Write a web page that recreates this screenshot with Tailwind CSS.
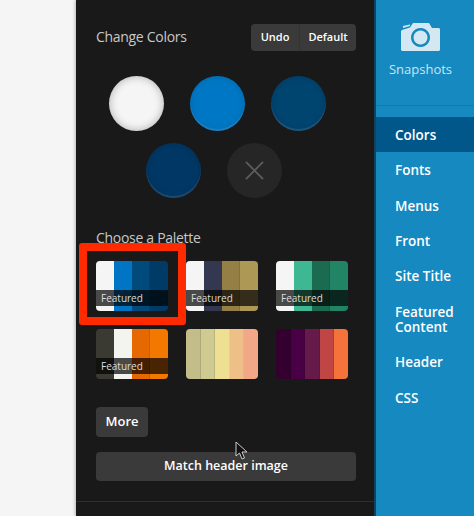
<!DOCTYPE html>
<html lang="en">
<head>
  <meta charset="UTF-8" />
  <title>Customize Colors</title>
  <script src="https://cdn.jsdelivr.net/npm/@tailwindcss/browser@4"></script>
</head>
<body class="bg-[#f5f5f5] font-['Open_Sans',sans-serif] overflow-hidden">
  <div class="flex h-[516px] w-[474px] overflow-hidden">
    <!-- page behind the panel -->
    <div class="w-[76px] shrink-0 bg-[#f5f5f5]"></div>

    <!-- colors panel -->
    <div class="relative w-[298px] shrink-0 bg-[#191919] shadow-[-1px_0_3px_rgba(0,0,0,0.25)]">
      <div class="pl-5 pr-[18px] pt-6">
        <div class="flex h-[27px] items-center justify-between">
          <h2 class="pb-[2px] text-[14px] tracking-[-0.3px] text-[#c8c8c8]">Change Colors</h2>
          <div class="flex">
            <button class="h-[27px] w-12 rounded-l-sm bg-[#3a3a3a] pb-[1px] text-[11px] font-semibold text-white">Undo</button>
            <button class="h-[27px] w-[57px] rounded-r-sm border-l border-[#333] bg-[#3a3a3a] pb-[1px] text-[11px] font-semibold text-white">Default</button>
          </div>
        </div>

        <div class="ml-[13px] mt-[25px] flex gap-[26px]">
          <div class="size-[55px] rounded-full bg-[#f5f5f5] shadow-[inset_0_0_8px_rgba(0,0,0,0.3)]"></div>
          <div class="size-[55px] rounded-full bg-[#0077c4] shadow-[inset_0_-2px_1px_rgba(255,255,255,0.12),inset_0_0_6px_rgba(0,0,0,0.15)]"></div>
          <div class="size-[55px] rounded-full bg-[#004470] shadow-[inset_0_-2px_1px_rgba(255,255,255,0.12),inset_0_0_6px_rgba(0,0,0,0.15)]"></div>
        </div>
        <div class="ml-[50px] mt-3 flex gap-[26px]">
          <div class="size-[55px] rounded-full bg-[#003764] shadow-[inset_0_-2px_1px_rgba(255,255,255,0.12),inset_0_0_6px_rgba(0,0,0,0.15)]"></div>
          <div class="flex size-[55px] items-center justify-center rounded-full bg-[#262626]">
            <svg class="size-[19px]" viewBox="0 0 20 20" fill="none" stroke="#5c5c5c" stroke-width="2"><path d="M1 1 19 19M19 1 1 19" /></svg>
          </div>
        </div>

        <h2 class="mt-[30px] text-[14px] leading-5 tracking-[-0.3px] text-[#c8c8c8]">Choose a Palette</h2>

        <div class="mt-[13px] grid grid-cols-[72px_72px_72px] gap-x-[18px] gap-y-[18px]">
          <div class="relative flex h-[50px] overflow-hidden rounded-sm">
            <div class="flex-1 bg-[#f5f5f5]"></div>
            <div class="flex-1 bg-[#0075c4]"></div>
            <div class="flex-1 border-r border-black/10 bg-[#004a7c]"></div>
            <div class="flex-1 bg-[#003a66]"></div>
            <div class="absolute inset-x-0 top-[29px] h-4 bg-black/70 pl-[5px] text-[10px] leading-4 text-[#ddd]">Featured</div>
          </div>
          <div class="relative flex h-[50px] overflow-hidden rounded-sm">
            <div class="flex-1 bg-[#f5f5f5]"></div>
            <div class="flex-1 bg-[#333850]"></div>
            <div class="flex-1 border-r border-black/10 bg-[#957f45]"></div>
            <div class="flex-1 bg-[#ae9856]"></div>
            <div class="absolute inset-x-0 top-[29px] h-4 bg-black/70 pl-[5px] text-[10px] leading-4 text-[#ddd]">Featured</div>
          </div>
          <div class="relative flex h-[50px] overflow-hidden rounded-sm">
            <div class="flex-1 bg-[#f5f5f5]"></div>
            <div class="flex-1 bg-[#3eb893]"></div>
            <div class="flex-1 border-r border-black/10 bg-[#1b6b50]"></div>
            <div class="flex-1 bg-[#218465]"></div>
            <div class="absolute inset-x-0 top-[29px] h-4 bg-black/70 pl-[5px] text-[10px] leading-4 text-[#ddd]">Featured</div>
          </div>
          <div class="relative flex h-[50px] overflow-hidden rounded-sm">
            <div class="flex-1 bg-[#3a3a32]"></div>
            <div class="flex-1 bg-[#f3f3ef]"></div>
            <div class="flex-1 border-r border-black/10 bg-[#e66800]"></div>
            <div class="flex-1 bg-[#f27800]"></div>
            <div class="absolute inset-x-0 top-[29px] h-4 bg-black/70 pl-[5px] text-[10px] leading-4 text-[#ddd]">Featured</div>
          </div>
          <div class="flex h-[50px] overflow-hidden rounded-sm">
            <div class="flex-1 border-r border-black/10 bg-[#c2bd89]"></div>
            <div class="flex-1 border-r border-black/10 bg-[#cfca8f]"></div>
            <div class="flex-1 border-r border-black/5 bg-[#efdf92]"></div>
            <div class="flex-1 border-r border-black/5 bg-[#eec088]"></div>
            <div class="flex-1 bg-[#f2a887]"></div>
          </div>
          <div class="flex h-[50px] overflow-hidden rounded-sm">
            <div class="flex-1 border-r border-black/10 bg-[#33002f]"></div>
            <div class="flex-1 border-r border-black/10 bg-[#4a0044]"></div>
            <div class="flex-1 border-r border-black/10 bg-[#661a4a]"></div>
            <div class="flex-1 border-r border-black/10 bg-[#c04545]"></div>
            <div class="flex-1 bg-[#f5733a]"></div>
          </div>
        </div>

        <button class="mt-[28px] block h-[30px] w-[52px] rounded-sm bg-[#3a3a3a] text-[13px] font-semibold text-white">More</button>
        <button class="mt-[15px] block h-[29px] w-[260px] rounded-sm bg-[#3a3a3a] text-[12.5px] font-semibold text-white">Match header image</button>
      </div>
      <div class="mt-5 h-px bg-[#2e2e2e]"></div>

      <!-- red annotation -->
      <div class="pointer-events-none absolute left-[3px] top-[243px] h-[82px] w-[107px] rounded-[3px] border-[8px] border-[#ff2a00]"></div>

      <!-- mouse pointer -->
      <svg class="absolute left-[159px] top-[441px] h-[19px] w-[13px]" viewBox="0 0 13 19"><path d="M1 1 1 15 4.5 12 7 18 9.5 17 7 11 12 11Z" fill="#111" stroke="#ccc" stroke-width="1" /></svg>
    </div>

    <!-- section nav -->
    <div class="flex-1 border-l-2 border-[#0f4566] bg-[#1589c0]">
      <div class="flex h-[106px] flex-col items-center border-b border-[#117bad] pr-[9px] pt-[23px]">
        <svg class="h-[28px] w-[39px]" viewBox="0 0 39 28">
          <path fill="#d3e8f3" fill-rule="evenodd" d="M1 7 9 4.5 12 0 28 0 31 5 38 5 39 6 39 27 38 28 1 28 0 27 0 8ZM19.5 5a9.5 9.5 0 1 0 .01 0ZM19.5 7.5a7 7 0 1 1-.01 0Z" />
          <path fill="#d3e8f3" d="M2 3 9 1.5 9 3 2 5Z" />
        </svg>
        <span class="mt-[10px] text-[13px] leading-4 text-[#cde4f0]">Snapshots</span>
      </div>
      <nav class="mt-[11px] text-[13.5px] font-semibold leading-[36px] text-white">
        <a class="block h-[35.25px] bg-[#02578a] pl-[19px]">Colors</a>
        <a class="block h-[35.25px] pl-[19px]">Fonts</a>
        <a class="block h-[35.25px] pl-[19px]">Menus</a>
        <a class="block h-[35.25px] pl-[19px]">Front</a>
        <a class="block h-[35.25px] pl-[19px]">Site Title</a>
        <a class="block h-[51px] pl-[19px] pt-[12px] leading-[15px]">Featured Content</a>
        <a class="block h-[35.25px] pl-[19px]">Header</a>
        <a class="block h-[35.25px] pl-[19px]">CSS</a>
      </nav>
    </div>
  </div>
</body>
</html>
